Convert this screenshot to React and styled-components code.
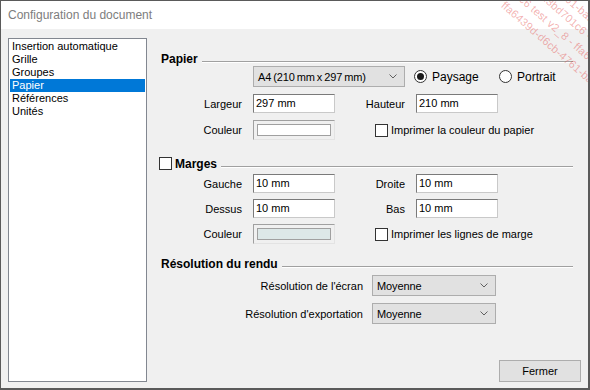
import React from 'react'
import styled, { createGlobalStyle } from 'styled-components'

const GlobalStyle = createGlobalStyle`
    html, body {
        margin: 0;
        padding: 0;
        background: #ffffff;
    }
    body {
        font-family: "Liberation Sans", Arial, sans-serif;
        font-size: 11px;
        color: #000;
    }
`;

const Window = styled.div`
    position: relative;
    width: 590px;
    height: 390px;
    box-sizing: border-box;
    border: 1px solid #5a5a5a;
    border-bottom-width: 2px;
    border-right-width: 2px;
    background: #f0f0f0;
    display: flex;
    flex-direction: column;
    overflow: hidden;
`;

const TitleBar = styled.div`
    height: 28px;
    flex: none;
    background: #ffffff;
    display: flex;
    align-items: center;
    padding-left: 7px;
    font-size: 12px;
    color: #7d7d7d;
`;

const Body = styled.div`
    flex: 1;
    display: flex;
    padding: 9px 7px 6px 7px;
    min-height: 0;
`;

const List = styled.ul`
    list-style: none;
    margin: 0;
    padding: 1px 1px;
    width: 139px;
    box-sizing: border-box;
    border: 1px solid #828790;
    background: #ffffff;
`;

const ListItem = styled.li`
    height: 13px;
    line-height: 13px;
    padding-left: 2px;
    white-space: nowrap;
    background: ${p => (p.$selected ? '#0078d7' : 'transparent')};
    color: ${p => (p.$selected ? '#ffffff' : '#000000')};
`;

const Main = styled.div`
    flex: 1;
    display: flex;
    flex-direction: column;
    padding-left: 12px;
`;

const Form = styled.div`
    display: flex;
    flex-direction: column;
    margin-right: 8px;
`;

const SectionHeader = styled.div`
    display: flex;
    align-items: center;
    height: 13px;
    margin-top: ${p => p.$mt ?? 0}px;
    margin-left: ${p => p.$ml ?? 2}px;
`;

const SectionTitle = styled.span`
    font-size: 12px;
    font-weight: bold;
    white-space: nowrap;
    margin-left: ${p => p.$ml ?? 0}px;
`;

const Rule = styled.div`
    flex: 1;
    margin-left: 4px;
    align-self: flex-end;
    margin-bottom: 2px;
    border-top: 1px solid #a0a0a0;
    border-bottom: 1px solid #ffffff;
`;

const FieldGrid = styled.div`
    display: grid;
    grid-template-columns: 94px 82px 81px 82px;
    align-items: center;
    margin-top: ${p => p.$mt ?? 0}px;
`;

const Label = styled.span`
    text-align: right;
    padding-right: ${p => p.$pr ?? 11}px;
    white-space: nowrap;
`;

const TextBox = styled.div`
    height: 19px;
    box-sizing: border-box;
    border: 1px solid;
    border-color: #7a7a7a #c9c9c9 #c9c9c9 #7a7a7a;
    background: #ffffff;
    padding-left: 2px;
    line-height: 17px;
`;

const ColorWell = styled.div`
    height: 20px;
    box-sizing: border-box;
    border: 1px solid;
    border-color: #a0a0a0 #e3e3e3 #e3e3e3 #a0a0a0;
    padding: 3px;
    display: flex;
`;

const ColorFill = styled.div`
    flex: 1;
    border: 1px solid #a0a0a0;
    background: ${p => p.$color};
`;

const CheckRow = styled.label`
    display: flex;
    align-items: center;
    gap: 3px;
    grid-column: ${p => p.$col ?? 'auto'};
    margin-left: ${p => p.$ml ?? 0}px;
    white-space: nowrap;
`;

const CheckBox = styled.span`
    width: 13px;
    height: 13px;
    box-sizing: border-box;
    border: 1px solid #333333;
    background: #ffffff;
    flex: none;
`;

const PaperRow = styled.div`
    display: flex;
    align-items: center;
    margin-left: 94px;
    margin-top: 1px;
`;

const Combo = styled.div`
    width: ${p => p.$w}px;
    height: 21px;
    box-sizing: border-box;
    border: 1px solid #adadad;
    background: #e1e1e1;
    display: flex;
    align-items: center;
    justify-content: space-between;
    padding: 0 7px 0 4px;
    flex: none;
    letter-spacing: -0.1px;
    word-spacing: ${p => p.$tight ? '-1px' : '0'};
`;

const RadioGroup = styled.div`
    display: flex;
    align-items: center;
    margin-left: 9px;
`;

const RadioOption = styled.label`
    display: flex;
    align-items: center;
    gap: 5px;
    width: ${p => p.$w ?? 'auto'};
    font-size: 12px;
`;

const Radio = styled.span`
    width: 13px;
    height: 13px;
    box-sizing: border-box;
    border-radius: 50%;
    border: 1px solid #333333;
    background: #ffffff;
    display: flex;
    align-items: center;
    justify-content: center;
    flex: none;

    &::after {
        content: '';
        width: 7px;
        height: 7px;
        border-radius: 50%;
        background: ${p => (p.$checked ? '#1a1a1a' : 'transparent')};
    }
`;

const ResGrid = styled.div`
    display: grid;
    grid-template-columns: 204px 124px;
    column-gap: 9px;
    row-gap: 7px;
    align-items: center;
    margin-top: 5px;
`;

const Footer = styled.div`
    margin-top: auto;
    display: flex;
    justify-content: flex-end;
`;

const Button = styled.button`
    width: 82px;
    height: 22px;
    box-sizing: border-box;
    border: 1px solid #adadad;
    background: #e1e1e1;
    font-family: "Liberation Sans", Arial, sans-serif;
    font-size: 11px;
    color: #000;
    padding: 0;
`;

const Watermark = styled.div`
    position: absolute;
    top: 0;
    left: 0;
    width: 100%;
    height: 100%;
    pointer-events: none;
    overflow: hidden;
`;

const MarkLine = styled.span`
    position: absolute;
    left: ${p => p.$x}px;
    top: ${p => p.$y}px;
    transform: rotate(41deg);
    transform-origin: 0 0;
    white-space: nowrap;
    font-size: 11px;
    color: rgba(226, 70, 70, 0.42);
    letter-spacing: 0.2px;
`;

function Chevron() {
    return (
        <svg width="8" height="5" viewBox="0 0 8 5">
            <polyline points="0.5,0.5 4,4 7.5,0.5" fill="none" stroke="#606060" strokeWidth="1" />
        </svg>
    )
}

const sections = ['Insertion automatique', 'Grille', 'Groupes', 'Papier', 'Références', 'Unités'];

export default function App() {
    return (
        <>
            <GlobalStyle />
            <Window>
                <TitleBar>Configuration du document</TitleBar>
                <Body>
                    <List>
                        {sections.map(s => (
                            <ListItem key={s} $selected={s === 'Papier'}>{s}</ListItem>
                        ))}
                    </List>
                    <Main>
                        <Form>
                            <SectionHeader $mt={14}>
                                <SectionTitle>Papier</SectionTitle>
                                <Rule />
                            </SectionHeader>

                            <PaperRow>
                                <Combo $w={152} $tight>
                                    <span>A4 (210 mm x 297 mm)</span>
                                    <Chevron />
                                </Combo>
                                <RadioGroup>
                                    <RadioOption $w="85px"><Radio $checked />Paysage</RadioOption>
                                    <RadioOption><Radio />Portrait</RadioOption>
                                </RadioGroup>
                            </PaperRow>

                            <FieldGrid $mt={7}>
                                <Label>Largeur</Label>
                                <TextBox>297 mm</TextBox>
                                <Label>Hauteur</Label>
                                <TextBox>210 mm</TextBox>
                            </FieldGrid>

                            <FieldGrid $mt={7}>
                                <Label>Couleur</Label>
                                <ColorWell><ColorFill $color="#ffffff" /></ColorWell>
                                <CheckRow $col="3 / 5" $ml={40}>
                                    <CheckBox />Imprimer la couleur du papier
                                </CheckRow>
                            </FieldGrid>

                            <SectionHeader $mt={17} $ml={0}>
                                <CheckBox />
                                <SectionTitle $ml={3}>Marges</SectionTitle>
                                <Rule />
                            </SectionHeader>

                            <FieldGrid $mt={4}>
                                <Label>Gauche</Label>
                                <TextBox>10 mm</TextBox>
                                <Label>Droite</Label>
                                <TextBox>10 mm</TextBox>
                            </FieldGrid>

                            <FieldGrid $mt={6}>
                                <Label>Dessus</Label>
                                <TextBox>10 mm</TextBox>
                                <Label>Bas</Label>
                                <TextBox>10 mm</TextBox>
                            </FieldGrid>

                            <FieldGrid $mt={6}>
                                <Label>Couleur</Label>
                                <ColorWell><ColorFill $color="#dde8e8" /></ColorWell>
                                <CheckRow $col="3 / 5" $ml={40}>
                                    <CheckBox />Imprimer les lignes de marge
                                </CheckRow>
                            </FieldGrid>

                            <SectionHeader $mt={13}>
                                <SectionTitle>Résolution du rendu</SectionTitle>
                                <Rule />
                            </SectionHeader>

                            <ResGrid>
                                <Label $pr={0}>Résolution de l'écran</Label>
                                <Combo $w={124}>
                                    <span>Moyenne</span>
                                    <Chevron />
                                </Combo>
                                <Label $pr={0}>Résolution d'exportation</Label>
                                <Combo $w={124}>
                                    <span>Moyenne</span>
                                    <Chevron />
                                </Combo>
                            </ResGrid>
                        </Form>
                        <Footer>
                            <Button>Fermer</Button>
                        </Footer>
                    </Main>
                </Body>
                <Watermark>
                    <MarkLine $x={506} $y={-2}>ffa6439d-d6cb-4761-baa3</MarkLine>
                    <MarkLine $x={524} $y={-8}>c6 test v2_8 - ffa6439d</MarkLine>
                    <MarkLine $x={546} $y={-10}>d3bd701c6 - ffa6439d</MarkLine>
                    <MarkLine $x={570} $y={-8}>61-baa3-d3bd701c6</MarkLine>
                </Watermark>
            </Window>
        </>
    )
}
